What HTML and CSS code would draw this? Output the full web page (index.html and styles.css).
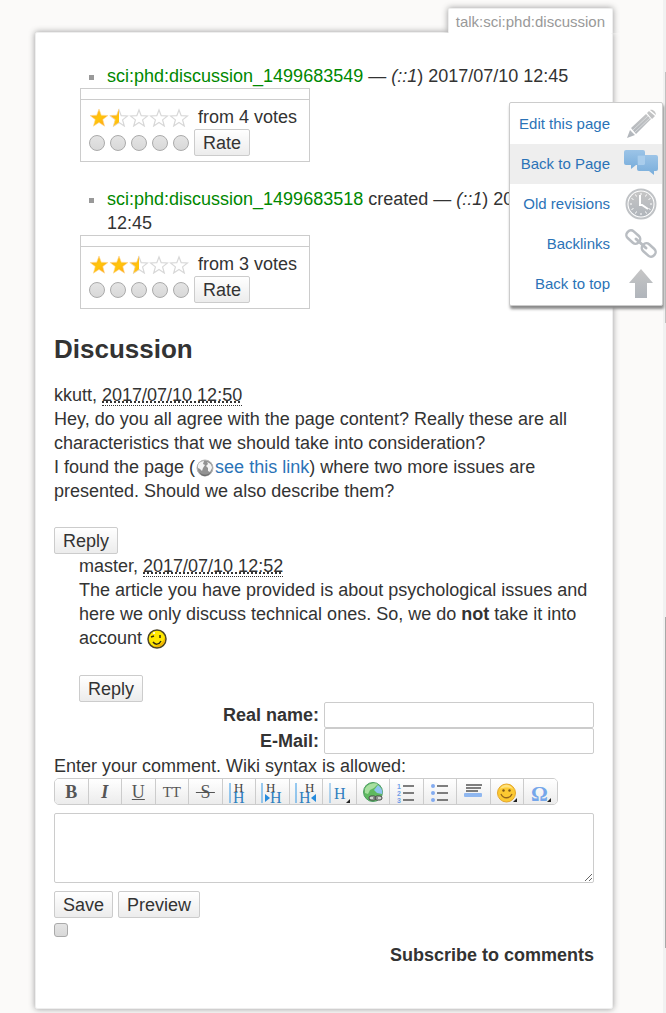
FILE: index.html
```html
<!DOCTYPE html>
<html lang="en">
<head>
    <meta charset="UTF-8">
    <meta name="viewport" content="width=device-width, initial-scale=1.0">
    <title>talk:sci:phd:discussion</title>
    <link rel="stylesheet" href="styles.css">
</head>
<body>
    <svg class="defs" aria-hidden="true">
        <defs>
            <linearGradient id="gold" x1="0" y1="0" x2="1" y2="1">
                <stop offset="0" stop-color="#ff9f20"/>
                <stop offset="0.5" stop-color="#ffc60a"/>
                <stop offset="1" stop-color="#ff9d1c"/>
            </linearGradient>
            <linearGradient id="grey" x1="0" y1="0" x2="0" y2="1">
                <stop offset="0" stop-color="#c6c6c6"/>
                <stop offset="1" stop-color="#b0b5bb"/>
            </linearGradient>
            <linearGradient id="blue" x1="0" y1="0" x2="0" y2="1">
                <stop offset="0" stop-color="#9cc4e7"/>
                <stop offset="1" stop-color="#78addb"/>
            </linearGradient>
            <clipPath id="half"><rect width="10" height="20"/></clipPath>
            <symbol id="star-off" viewBox="0 0 20 20">
                <path d="M10 3l2.2 5.700 6.300.300-4.900 3.900 1.700 6.100-5.300-3.500L4.700 19l1.700-6.100L1.500 9l6.300-.300z" fill="#fff" stroke="#d8d8d8" stroke-width="1.200"/>
            </symbol>
            <symbol id="star-on" viewBox="0 0 20 20">
                <path d="M10 2l2.300 6.200 6.700.300-5.200 4.100 1.800 6.600-5.600-3.700-5.600 3.700 1.800-6.600L1 8.500l6.700-.300z" fill="url(#gold)" stroke="#ffd894" stroke-width=".6"/>
            </symbol>
            <symbol id="star-half" viewBox="0 0 20 20">
                <use href="#star-off"/>
                <use href="#star-on" clip-path="url(#half)"/>
            </symbol>
        </defs>
    </svg>

    <main>
        <div class="page-id"><span>talk:sci:phd:discussion</span></div>
        <div class="page">
            <ul class="threads">
                <li>
                    <a href="#" class="wikilink">sci:phd:discussion_1499683549</a> — <em>(::1</em>) 2017/07/10 12:45
                </li>
            </ul>
            <form class="rating">
                <div class="rating-head"></div>
                <div class="rating-body">
                    <div class="score">
                        <svg><use href="#star-on"/></svg>
                        <svg><use href="#star-half"/></svg>
                        <svg><use href="#star-off"/></svg>
                        <svg><use href="#star-off"/></svg>
                        <svg><use href="#star-off"/></svg>
                        <span>from 4 votes</span>
                    </div>
                    <div class="vote">
                        <input type="radio" name="vote" aria-label="1">
                        <input type="radio" name="vote" aria-label="2">
                        <input type="radio" name="vote" aria-label="3">
                        <input type="radio" name="vote" aria-label="4">
                        <input type="radio" name="vote" aria-label="5">
                        <button type="button" class="button">Rate</button>
                    </div>
                </div>
            </form>

            <ul class="threads">
                <li>
                    <a href="#" class="wikilink">sci:phd:discussion_1499683518</a> created — <em>(::1</em>) 2017/07/10 12:45
                </li>
            </ul>
            <form class="rating">
                <div class="rating-head"></div>
                <div class="rating-body">
                    <div class="score">
                        <svg><use href="#star-on"/></svg>
                        <svg><use href="#star-on"/></svg>
                        <svg><use href="#star-half"/></svg>
                        <svg><use href="#star-off"/></svg>
                        <svg><use href="#star-off"/></svg>
                        <span>from 3 votes</span>
                    </div>
                    <div class="vote">
                        <input type="radio" name="vote" aria-label="1">
                        <input type="radio" name="vote" aria-label="2">
                        <input type="radio" name="vote" aria-label="3">
                        <input type="radio" name="vote" aria-label="4">
                        <input type="radio" name="vote" aria-label="5">
                        <button type="button" class="button">Rate</button>
                    </div>
                </div>
            </form>

            <h2>Discussion</h2>
            <div class="comment">
                <div>kkutt, <abbr>2017/07/10 12:50</abbr></div>
                <p>Hey, do you all agree with the page content? Really these are all characteristics that we should take into consideration?<br>
                I found the page (<a href="#" class="external"><svg class="globe" viewBox="0 0 18 18">
                    <circle cx="9" cy="9" r="8" fill="#929292" stroke="#b5b5b5"/>
                    <path d="M2 6c1-3 4-4 6-4l-1 3 2 1-2 3-1 3-2-2-2-1zM11 3c3 1 5 3 5 6l-2 4-2-1V9l-2-2 2-2z" fill="#f4f4f4"/>
                    <path d="M3 13c3 3 8 4 12 0-2 5-9 6-12 0z" fill="#6f6f6f"/>
                </svg>see this link</a>) where two more issues are presented. Should we also describe them?</p>
                <button type="button" class="button">Reply</button>
            </div>
            <div class="comment nested">
                <div>master, <abbr>2017/07/10 12:52</abbr></div>
                <p>The article you have provided is about psychological issues and here we only discuss technical ones. So, we do <strong>not</strong> take it into account <svg class="smiley" viewBox="0 0 20 20">
                    <circle cx="10" cy="10" r="9" fill="#ffe800" stroke="#4d4526" stroke-width="1.500"/>
                    <path d="M18 8c1 8-6 12-12 9 6 0 10-3 12-9z" fill="#f1b300"/>
                    <path d="M4 8l3-1M13 6v3M6 13c2 3 6 3 8-1" fill="none" stroke="#332b10" stroke-width="1.500"/>
                    <circle cx="7" cy="4" r="1" fill="#fff"/>
                </svg></p>
                <button type="button" class="button">Reply</button>
            </div>

            <form class="comment-form">
                <div class="field">
                    <label for="name">Real name:</label>
                    <input type="text" id="name">
                </div>
                <div class="field">
                    <label for="mail">E-Mail:</label>
                    <input type="text" id="mail">
                </div>
                <label for="comment" class="hint">Enter your comment. Wiki syntax is allowed:</label>
                <div class="toolbar">
                    <button type="button" aria-label="Bold"><b>B</b></button>
                    <button type="button" aria-label="Italic"><b><i>I</i></b></button>
                    <button type="button" aria-label="Underlined"><u>U</u></button>
                    <button type="button" class="mono" aria-label="Monospaced">TT</button>
                    <button type="button" aria-label="Strike-through"><s>&nbsp;S&nbsp;</s></button>
                    <button type="button" aria-label="Same level headline">
                        <svg viewBox="0 0 22 24">
                            <path d="M2 3v20" stroke="#3298e6"/>
                            <text x="6" y="12" class="h-dark">H</text>
                            <text x="5" y="23" class="h-blue">H</text>
                        </svg>
                    </button>
                    <button type="button" aria-label="Lower headline">
                        <svg viewBox="0 0 22 24">
                            <path d="M1 3v20" stroke="#3298e6"/>
                            <path d="M4 14l5 4-5 4z" fill="#258bdd"/>
                            <text x="5" y="12" class="h-dark">H</text>
                            <text x="9" y="23" class="h-blue">H</text>
                        </svg>
                    </button>
                    <button type="button" aria-label="Higher headline">
                        <svg viewBox="0 0 22 24">
                            <path d="M1 3v20" stroke="#3298e6"/>
                            <path d="M21 14l-5 4 5 4z" fill="#258bdd"/>
                            <text x="10" y="12" class="h-dark">H</text>
                            <text x="4" y="23" class="h-blue">H</text>
                        </svg>
                    </button>
                    <button type="button" aria-label="Select headline">
                        <svg viewBox="0 0 22 24">
                            <path d="M1 3v20" stroke="#69aee4"/>
                            <text x="5" y="19" class="h-blue">H</text>
                            <path d="M21 19v4h-4z" fill="#222"/>
                        </svg>
                    </button>
                    <button type="button" aria-label="Internal link">
                        <svg viewBox="0 0 22 24">
                            <circle cx="11" cy="12" r="9.500" fill="#5fb95f" stroke="#4c9c63"/>
                            <path d="M3 9c2-5 9-7 13-5l-4 4-4 2-2 4-3-1z" fill="#a8dfa0"/>
                            <path d="M12 10l4-5c4 3 5 7 4 9l-5-1z" fill="#8dc5ee"/>
                            <rect x="7" y="16" width="7" height="4" rx="2" fill="#cfd6d0" stroke="#444"/>
                            <rect x="13" y="16" width="7" height="4" rx="2" fill="#cfd6d0" stroke="#444"/>
                            <path d="M11 18h5" stroke="#444"/>
                        </svg>
                    </button>
                    <button type="button" aria-label="Ordered list">
                        <svg viewBox="0 0 22 24">
                            <text x="1" y="9" class="num">1</text>
                            <text x="1" y="16" class="num">2</text>
                            <text x="1" y="23" class="num">3</text>
                            <path d="M7 6h11M7 13h11M7 20h11" stroke="#555" stroke-width="1.500"/>
                        </svg>
                    </button>
                    <button type="button" aria-label="Unordered list">
                        <svg viewBox="0 0 22 24">
                            <circle cx="4" cy="6" r="2" fill="#82abf0"/>
                            <circle cx="4" cy="13" r="2" fill="#82abf0"/>
                            <circle cx="4" cy="20" r="2" fill="#82abf0"/>
                            <path d="M8 6h11M8 13h11M8 20h11" stroke="#555" stroke-width="1.500"/>
                        </svg>
                    </button>
                    <button type="button" aria-label="Horizontal rule">
                        <svg viewBox="0 0 22 24">
                            <path d="M3 5h16M3 8h15M3 11h12" stroke="#555" stroke-width="1.500"/>
                            <rect x="1" y="13" width="18" height="4" rx="1" fill="#8fb7f0"/>
                        </svg>
                    </button>
                    <button type="button" aria-label="Smileys">
                        <svg viewBox="0 0 22 24">
                            <circle cx="10.500" cy="13" r="9" fill="#fbc932" stroke="#e4a62b"/>
                            <path d="M4 9c2-5 10-6 13 0-4-2-9-2-13 0z" fill="#ffe27b"/>
                            <circle cx="7.500" cy="10.500" r="1.200" fill="#7d5716"/>
                            <circle cx="13.500" cy="10.500" r="1.200" fill="#7d5716"/>
                            <path d="M5 14c2 5 9 5 11 0" fill="none" stroke="#94661c" stroke-width="1.300"/>
                            <path d="M21 18v4h-4z" fill="#222"/>
                        </svg>
                    </button>
                    <button type="button" aria-label="Special chars">
                        <svg viewBox="0 0 22 24">
                            <text x="1" y="21" class="omega">Ω</text>
                            <path d="M21 18v4h-4z" fill="#222"/>
                        </svg>
                    </button>
                </div>
                <textarea id="comment"></textarea>
                <div class="actions">
                    <button type="button" class="button">Save</button>
                    <button type="button" class="button">Preview</button>
                </div>
                <input type="checkbox" id="subscribe">
                <label for="subscribe" class="subscribe">Subscribe to comments</label>
            </form>
        </div>
    </main>

    <nav class="pagetools">
        <a href="#">Edit this page
            <svg viewBox="0 0 34 32">
                <path d="M3 30l3-8 5 5zM7 20L22 6l5 5-15 15zM23 5l2-2 6 5-3 3zM26 2c3-1 6 2 6 5z" fill="url(#grey)"/>
                <path d="M9 22L24 8M11 24L26 10" stroke="#e4e6e8" stroke-width=".7"/>
            </svg>
        </a>
        <a href="#" class="active">Back to Page
            <svg viewBox="0 0 34 32">
                <path d="M2 2h17a2 2 0 0 1 2 2v11a2 2 0 0 1-2 2h-7l-5 4v-4H2a2 2 0 0 1-2-2V4a2 2 0 0 1 2-2z" fill="url(#blue)"/>
                <path d="M15 7h17a2 2 0 0 1 2 2v12a2 2 0 0 1-2 2h-2v4l-5-4H15a2 2 0 0 1-2-2V9a2 2 0 0 1 2-2z" fill="url(#blue)"/>
                <path d="M14 8h7v8l-1 1h-6z" fill="#a9cdec"/>
            </svg>
        </a>
        <a href="#">Old revisions
            <svg viewBox="0 0 34 32">
                <circle cx="17" cy="16" r="14.500" fill="#fff" stroke="#c0c3c6" stroke-width="2"/>
                <circle cx="17" cy="16" r="12.500" fill="url(#grey)"/>
                <path d="M17 5v2M17 25v2M6 16h2M26 16h2M11.500 6.500l1 2M21.500 23.500l1 2M7.500 10.500l2 1M24.500 20.500l2 1M22.500 6.500l-1 2M12.500 23.500l-1 2M7.500 21.500l2-1M24.500 11.500l2-1" stroke="#fff"/>
                <path d="M16 7v10h2l6 4" fill="none" stroke="#fff" stroke-width="2"/>
            </svg>
        </a>
        <a href="#">Backlinks
            <svg viewBox="0 0 34 32">
                <g fill="none" stroke="#b9bdc2" stroke-width="2.500">
                    <rect x="2" y="5" width="15" height="9" rx="4" transform="rotate(42 10 9)"/>
                    <rect x="17" y="17" width="15" height="9" rx="4" transform="rotate(42 24 22)"/>
                    <path d="M12 11l10 9" stroke-linecap="round" stroke-width="3"/>
                </g>
            </svg>
        </a>
        <a href="#">Back to top
            <svg viewBox="0 0 34 32">
                <path d="M17 1l12 14h-6v15H11V15H5z" fill="url(#grey)"/>
            </svg>
        </a>
    </nav>

    <div class="track">
        <div class="thumb upper"></div>
        <div class="thumb lower"></div>
    </div>
</body>
</html>
```
FILE: styles.css
```css
* {
    box-sizing: border-box;
}
body {
    display: flex;
    margin: 0;
    position: relative;
    background-color: #fbfaf9;
    color: #333;
    font: 18px/24px "Liberation Sans", Arial, sans-serif;
}
a {
    color: #2b73b7;
    text-decoration: none;
}
.defs {
    position: absolute;
    width: 0;
    height: 0;
}
main {
    flex: 1;
    padding: 0 53px 4px 35px;
    margin-right: -3px;
}

/* page id tab */
.page-id {
    position: relative;
    z-index: 1;
    display: flex;
    justify-content: flex-end;
    overflow: hidden;
    margin: 0 -8px -1px 0;
    padding: 8px 8px 0 0;
}
.page-id span {
    padding: 2px 7px 0;
    height: 25px;
    background: #fff;
    border: 1px solid #eee;
    border-bottom: none;
    border-radius: 2px 2px 0 0;
    box-shadow: 0 0 6px #999;
    color: #999;
    font-size: 15px;
    line-height: 22px;
}
.page {
    padding: 31px 18px 41px;
    background: #fff;
    border: 1px solid #eee;
    border-radius: 2px;
    box-shadow: 0 0 6px #999;
}

/* rated threads */
.threads {
    margin: 0;
    padding: 0 0 0 53px;
    list-style: none;
}
.threads li::before {
    content: "";
    float: left;
    width: 5px;
    height: 5px;
    margin: 11px 0 0 -18px;
    background: #999;
}
.wikilink {
    color: #080;
}
.rating {
    width: 230px;
    margin: 0 0 25px 26px;
    border: 1px solid #ccc;
}
.rating-head {
    height: 11px;
    border-bottom: 1px solid #ccc;
}
.rating-body {
    padding: 5px 8px;
}
.score, .vote {
    display: flex;
    align-items: center;
}
.score svg {
    width: 20px;
    height: 20px;
}
.score span {
    margin-left: 9px;
}
.vote {
    gap: 5px;
}
.vote input {
    appearance: none;
    width: 16px;
    height: 16px;
    margin: 0;
    border: 1px solid #aaa;
    border-radius: 50%;
    background: linear-gradient(#e4e4e4, #d8d8d8);
}
.button {
    height: 27px;
    padding: 0 8px;
    border: 1px solid #ccc;
    border-radius: 2px;
    background: linear-gradient(#fff, #ececec);
    color: #333;
    font: inherit;
    line-height: 24px;
}

/* comments */
h2 {
    margin: 0 0 19px;
    font-size: 26px;
    line-height: 30px;
}
.comment p {
    margin: 0 0 24px;
}
.comment .button {
    display: block;
}
.nested {
    margin-left: 25px;
}
.nested p {
    margin-bottom: 25px;
}
abbr {
    border-bottom: 1px dotted #333;
    text-decoration: underline dotted;
}
.globe {
    width: 18px;
    height: 18px;
    margin: 0 1px;
    vertical-align: -4px;
}
.smiley {
    width: 20px;
    height: 20px;
    vertical-align: middle;
}

/* comment form */
.field {
    display: flex;
    align-items: center;
    justify-content: flex-end;
    gap: 5px;
    font-weight: bold;
}
.field input {
    width: 50%;
    height: 26px;
    border: 1px solid #ccc;
    border-radius: 2px;
    font: inherit;
}
.hint {
    display: block;
}
.toolbar {
    display: flex;
    max-width: 504px;
    height: 27px;
    overflow: hidden;
    border: 1px solid #ccc;
    border-radius: 5px;
}
.toolbar button {
    display: flex;
    flex: 1;
    align-items: center;
    justify-content: center;
    padding: 0;
    border: none;
    border-right: 1px solid #ccc;
    background: linear-gradient(#fff, #ececec);
    color: #555;
    font: 18px/24px "Liberation Serif", serif;
}
.toolbar button:last-child {
    border-right: none;
}
.toolbar .mono {
    font-size: 15px;
}
.toolbar svg {
    width: 22px;
    height: 24px;
}
.h-dark {
    fill: #444;
    font: 13px "Liberation Serif", serif;
}
.h-blue {
    fill: #2e80bf;
    font: 16px "Liberation Serif", serif;
}
.num {
    fill: #6e9de8;
    font: bold 7px "Liberation Sans", sans-serif;
}
.omega {
    fill: #75a6ea;
    font: bold 21px "Liberation Serif", serif;
}
textarea {
    display: block;
    width: 100%;
    height: 70px;
    margin: 8px 0;
    border: 1px solid #ccc;
    border-radius: 2px;
    font: inherit;
}
.actions {
    display: flex;
    gap: 5px;
}
input[type="checkbox"] {
    display: block;
    appearance: none;
    width: 14px;
    height: 14px;
    margin: 5px 0 6px;
    border: 1px solid #aaa;
    border-radius: 3px;
    background: linear-gradient(#e4e4e4, #d8d8d8);
}
.subscribe {
    display: block;
    text-align: right;
    font-weight: bold;
}

/* page tools menu lies over the page */
.pagetools {
    position: absolute;
    top: 102px;
    right: 3px;
    z-index: 2;
    width: 154px;
    padding: 1px 0;
    background: #fff;
    border: 1px solid #ccc;
    border-radius: 2px;
    box-shadow: 1px 3px 3px #888;
    font-size: 15px;
}
.pagetools a {
    display: flex;
    align-items: center;
    justify-content: flex-end;
    gap: 14px;
    height: 40px;
    padding-right: 4px;
}
.pagetools .active {
    background: #eee;
}
.pagetools svg {
    width: 34px;
    height: 32px;
}
.track {
    display: flex;
    flex-direction: column;
    align-items: flex-end;
    width: 3px;
    padding-top: 72px;
    background: #f1f1f1;
}
.thumb {
    width: 1px;
}
.upper {
    height: 251px;
    margin-bottom: 294px;
    background: #c1c1c1;
}
.lower {
    height: 331px;
    background: #a8a8a8;
}
```
